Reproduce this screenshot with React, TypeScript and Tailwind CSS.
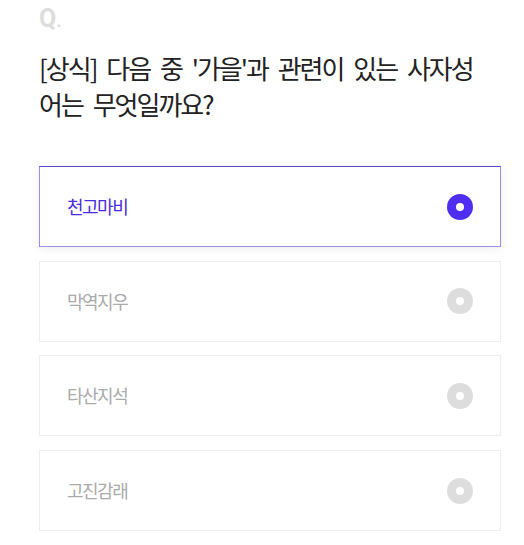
import { useState } from "react";

const OPTIONS = ["천고마비", "막역지우", "타산지석", "고진감래"];

export default function App() {
  const [selected, setSelected] = useState(0);

  return (
    <div className="min-h-[545px] w-[524px] bg-white font-['Noto_Sans_CJK_KR','Noto_Sans',sans-serif]">
      <div className="pl-[39px] pr-[23px] pt-[4px]">
        {/* Q label */}
        <div className="h-[30px] text-[25px] font-bold leading-[30px] text-[#dddddd] font-['Roboto',sans-serif]">
          Q<span className="text-[18px]">.</span>
        </div>

        {/* Question */}
        <h1 className="mt-[16px] mr-[20px] text-[26px] font-normal leading-[36px] tracking-[-2px] [word-spacing:6px] text-[#222222]">
          [상식] 다음 중 '가을'과 관련이 있는 사자성어는 무엇일까요?
        </h1>

        {/* Options */}
        <div className="mt-[44px] flex flex-col gap-[13.7px]">
          {OPTIONS.map((label, i) => {
            const active = selected === i;
            return (
              <button
                key={label}
                onClick={() => setSelected(i)}
                className={`flex h-[81px] w-full items-center justify-between pl-[27px] pr-[27px] text-left ${
                  active
                    ? "border border-[#9d8de8] border-t-[#5a43cf] shadow-[0_2px_10px_rgba(0,0,0,0.07)]"
                    : "border border-[#eeeeee]"
                }`}
              >
                <span className={`text-[18px] tracking-[-1.5px] ${active ? "text-[#4a2ddc]" : "text-[#aaaaaa]"}`}>{label}</span>
                <span
                  className={`flex h-[26px] w-[26px] items-center justify-center rounded-full ${
                    active ? "bg-[#4f2ef2]" : "bg-[#dddddd]"
                  }`}
                >
                  <span className="h-[8px] w-[8px] rounded-full bg-white" />
                </span>
              </button>
            );
          })}
        </div>
      </div>
    </div>
  );
}
